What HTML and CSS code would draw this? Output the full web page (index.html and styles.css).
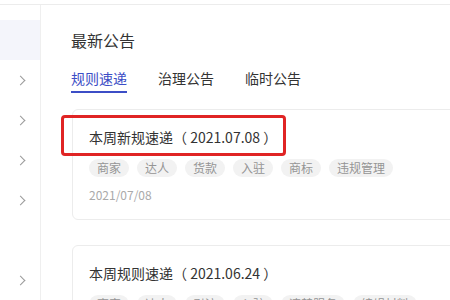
FILE: index.html
```html
<!DOCTYPE html>
<html lang="zh-CN">
<head>
    <meta charset="UTF-8">
    <meta name="viewport" content="width=device-width, initial-scale=1.0">
    <title>最新公告</title>
    <link rel="stylesheet" href="styles.css">
</head>
<body>
    <div class="topbar"></div>
    <div class="layout">
        <div class="sidebar">
            <div class="side-item active"></div>
            <div class="side-item"><span class="chevron"></span></div>
            <div class="side-item"><span class="chevron"></span></div>
            <div class="side-item"><span class="chevron"></span></div>
            <div class="side-item"><span class="chevron"></span></div>
            <div class="side-item"></div>
            <div class="side-item"><span class="chevron"></span></div>
        </div>
        <div class="main">
            <div class="title">最新公告</div>
            <div class="tabs">
                <div class="tab active">规则速递</div>
                <div class="tab">治理公告</div>
                <div class="tab">临时公告</div>
            </div>
            <div class="card">
                <div class="highlight"></div>
                <div class="card-title">本周新规速递（ 2021.07.08 ）</div>
                <div class="tags">
                    <span class="tag">商家</span>
                    <span class="tag">达人</span>
                    <span class="tag">货款</span>
                    <span class="tag">入驻</span>
                    <span class="tag">商标</span>
                    <span class="tag">违规管理</span>
                </div>
                <div class="card-date">2021/07/08</div>
            </div>
            <div class="card">
                <div class="card-title">本周规则速递（ 2021.06.24 ）</div>
                <div class="tags">
                    <span class="tag">商家</span>
                    <span class="tag">达人</span>
                    <span class="tag">引流</span>
                    <span class="tag">入驻</span>
                    <span class="tag">违禁服务</span>
                    <span class="tag">编辑材料</span>
                </div>
                <div class="card-date">2021/06/24</div>
            </div>
        </div>
    </div>
</body>
</html>
```

FILE: styles.css
```css
/* Base */
body, html {
    margin: 0;
    background: #ffffff;
    font-family: "Noto Sans CJK SC", "Noto Sans", sans-serif;
    color: #333333;
    overflow: hidden;
}

.topbar {
    height: 4px;
    border-bottom: 1px solid #ececec;
}

.layout {
    display: flex;
}

/* Sidebar */
.sidebar {
    width: 40px;
    flex-shrink: 0;
    border-right: 1px solid #efefef;
    padding-top: 15px;
    height: 400px;
}

.side-item {
    height: 40px;
    display: flex;
    align-items: center;
    justify-content: center;
}

.side-item.active {
    background: #f4f5fb;
}

.chevron {
    width: 6px;
    height: 6px;
    border-right: 1px solid #9a9a9a;
    border-top: 1px solid #9a9a9a;
    transform: rotate(45deg);
    margin-left: 1px;
}

/* Main */
.main {
    flex-grow: 1;
    padding: 24px 0 0 30px;
    min-width: 0;
}

.title {
    font-size: 16px;
    line-height: 22px;
    color: #333;
}

.tabs {
    display: flex;
    gap: 31px;
    margin-top: 17px;
}

.tab {
    font-size: 14px;
    line-height: 20px;
    padding-bottom: 3px;
    border-bottom: 2px solid transparent;
    color: #333;
}

.tab.active {
    color: #3c4ec6;
    border-bottom-color: #3c4ec6;
}

/* Cards */
.card {
    position: relative;
    margin: 16px -20px 0 1px;
    padding: 16px 16px 15px;
    border: 1px solid #ececec;
    border-radius: 6px;
}

.card + .card {
    margin-top: 25px;
}

.highlight {
    position: absolute;
    left: -12px;
    top: 5px;
    width: 219px;
    height: 35px;
    border: 3px solid #e02424;
    border-radius: 4px;
}

.card-title {
    font-size: 14px;
    line-height: 22px;
    color: #333;
}

.tags {
    display: flex;
    gap: 8px;
    margin-top: 11px;
}

.tag {
    font-size: 12px;
    line-height: 18px;
    padding: 0 8px;
    border-radius: 9px;
    background: #f2f2f2;
    color: #959595;
}

.card-date {
    margin-top: 9px;
    font-size: 12px;
    line-height: 18px;
    color: #aaa;
}
```
